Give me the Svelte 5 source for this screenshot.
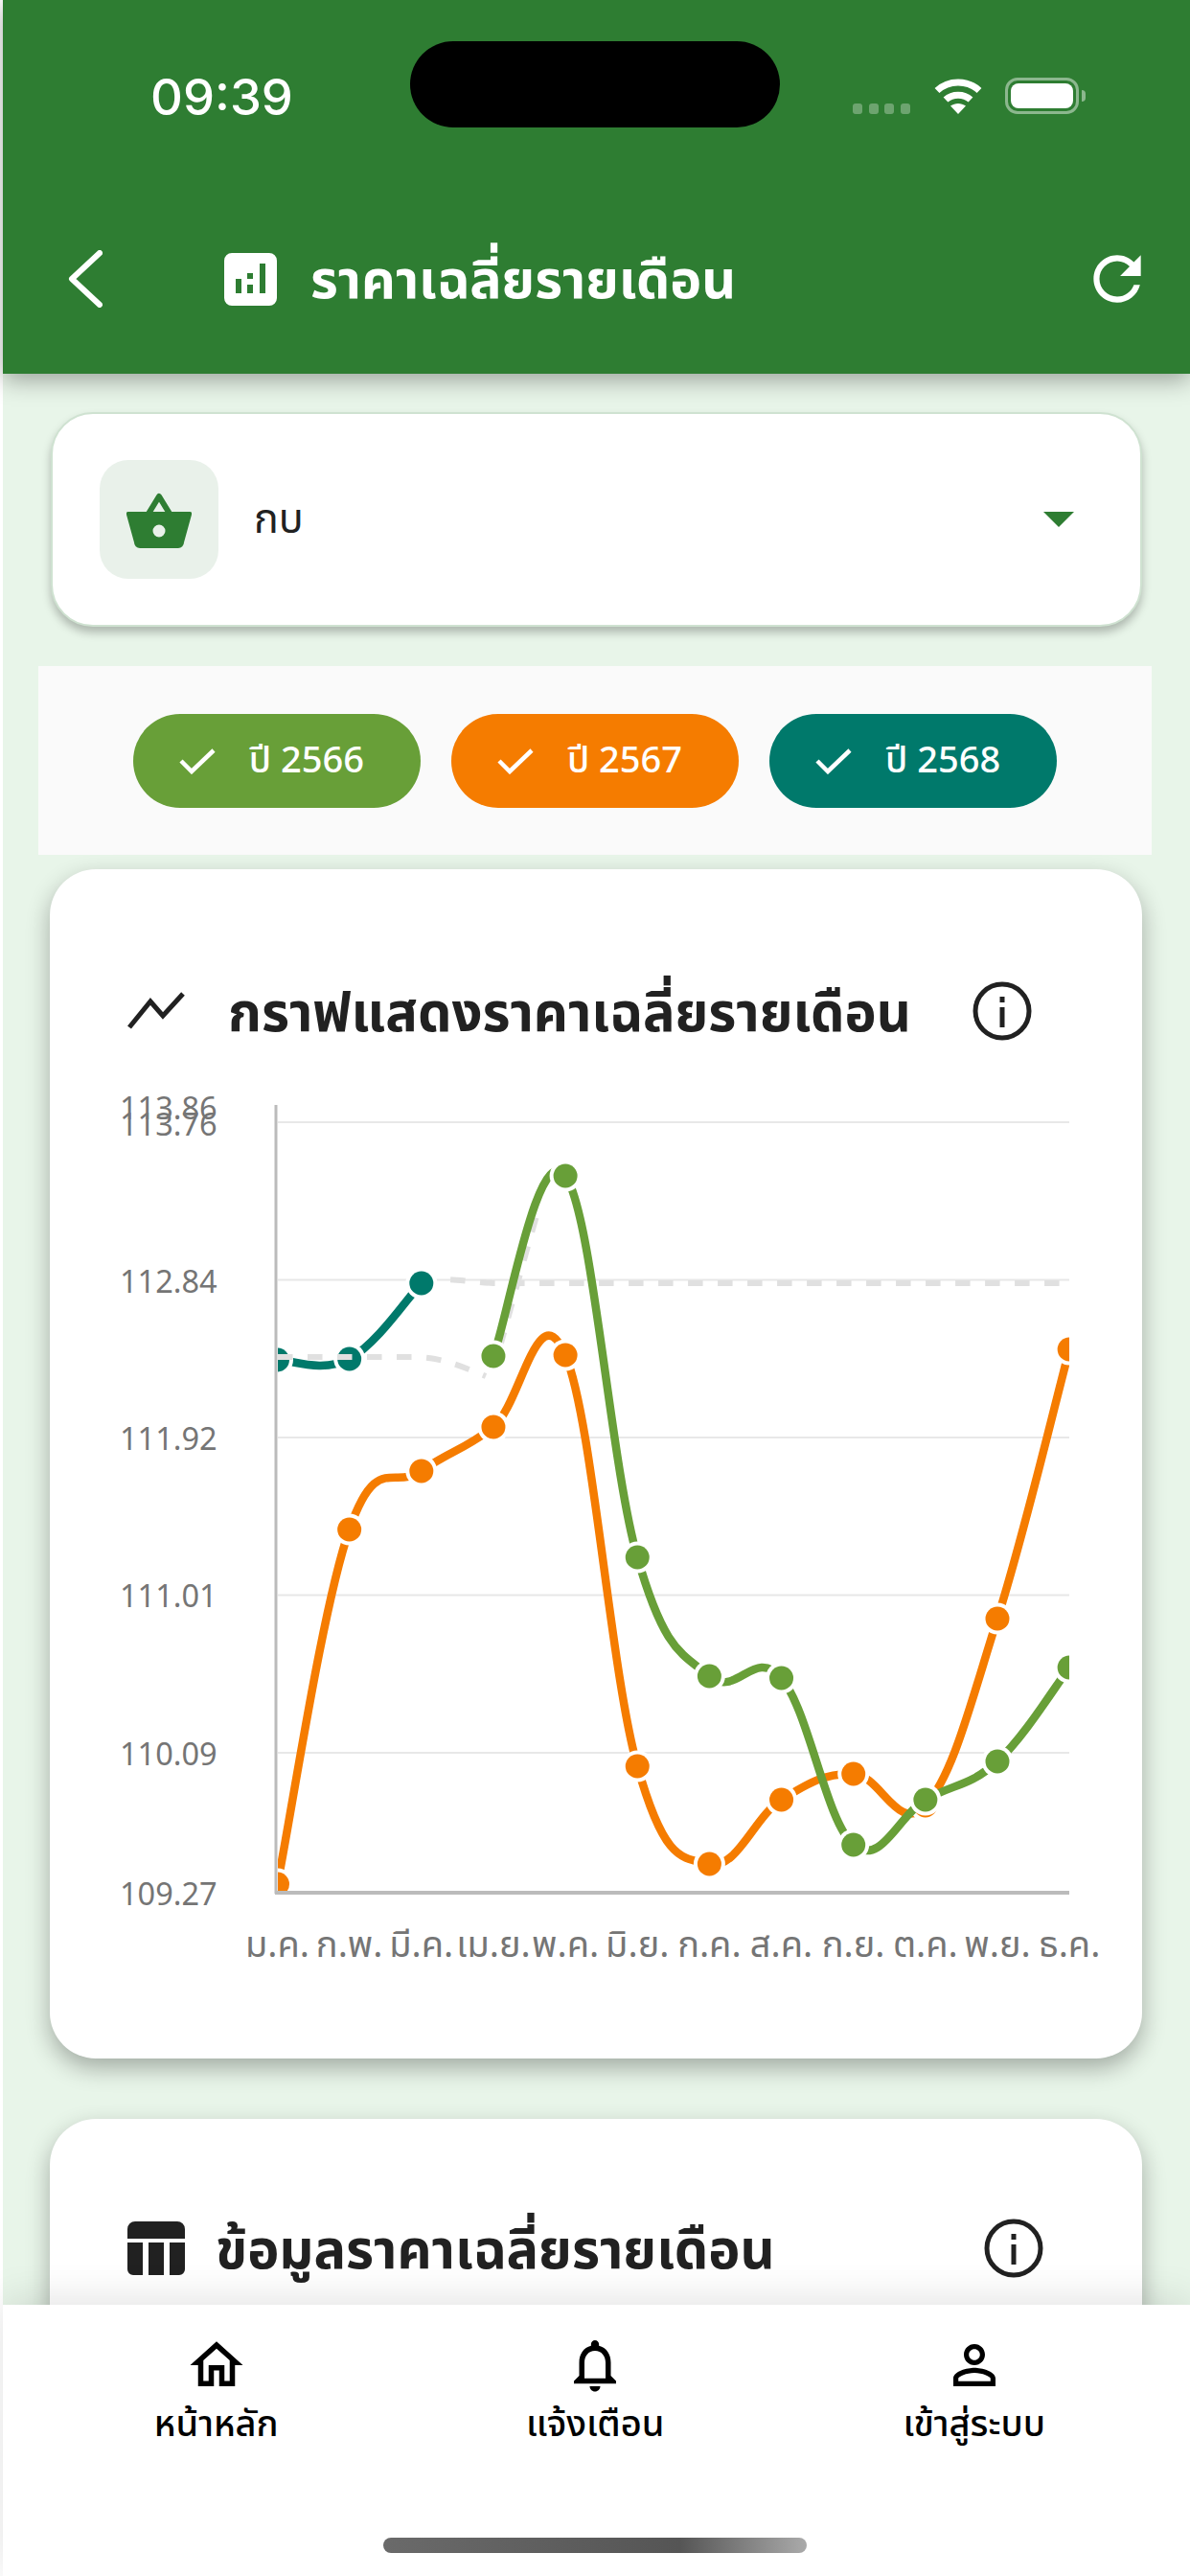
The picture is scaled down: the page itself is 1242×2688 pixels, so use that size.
<script>
  const xAt = (i) => 289.5 + i * 75.15;
  const smooth = 0.38;

  const series = [
    {
      name: "2567",
      color: "#f57c00",
      from: 0,
      ys: [1966, 1596, 1535, 1489, 1414, 1843, 1945, 1878, 1851, 1884, 1689, 1408],
    },
    { name: "2568", color: "#00796b", from: 0, ys: [1419, 1418, 1339] },
    {
      name: "2566",
      color: "#689f38",
      from: 3,
      ys: [1415, 1227, 1625, 1749, 1751, 1925, 1878, 1838, 1740],
    },
  ];

  const years = [
    { label: "ปี 2566", color: "#689f38" },
    { label: "ปี 2567", color: "#f57c00" },
    { label: "ปี 2568", color: "#00796b" },
  ];
  const months = ["ม.ค.", "ก.พ.", "มี.ค.", "เม.ย.", "พ.ค.", "มิ.ย.", "ก.ค.", "ส.ค.", "ก.ย.", "ต.ค.", "พ.ย.", "ธ.ค."];
  const grid = [1171, 1335.5, 1500, 1664.5, 1829];
  const yLabels = [
    { t: "113.86", y: 1155 },
    { t: "113.76", y: 1172 },
    { t: "112.84", y: 1336 },
    { t: "111.92", y: 1500 },
    { t: "111.01", y: 1664 },
    { t: "110.09", y: 1829 },
    { t: "109.27", y: 1975 },
  ];
  const navItems = [
    {
      label: "หน้าหลัก",
      d: "M12 5.69l5 4.5V18h-2v-6H9v6H7v-7.81l5-4.5M12 3L2 12h3v8h6v-6h2v6h6v-8h3L12 3z",
    },
    {
      label: "แจ้งเตือน",
      d: "M12 22c1.1 0 2-.9 2-2h-4c0 1.1.89 2 2 2zm6-6v-5c0-3.07-1.64-5.64-4.5-6.32V4c0-.83-.67-1.5-1.5-1.5s-1.5.67-1.5 1.5v.68C7.63 5.36 6 7.92 6 11v5l-2 2v1h16v-1l-2-2zm-2 1H8v-6c0-2.48 1.51-4.5 4-4.5s4 2.02 4 4.5v6z",
    },
    {
      label: "เข้าสู่ระบบ",
      d: "M12 5.9c1.16 0 2.1.94 2.1 2.1s-.94 2.1-2.1 2.1S9.9 9.16 9.9 8s.94-2.1 2.1-2.1m0 9c2.97 0 6.1 1.46 6.1 2.1v1.1H5.9V17c0-.64 3.13-2.1 6.1-2.1M12 4C9.79 4 8 5.79 8 8s1.79 4 4 4 4-1.79 4-4-1.79-4-4-4zm0 9c-2.67 0-8 1.34-8 4v3h16v-3c0-2.66-5.33-4-8-4z",
    },
  ];

  function points(s) {
    return s.ys.map((y, i) => ({ x: xAt(s.from + i), y }));
  }

  // same idea as a curved chart line: tangent from the two neighbours
  function curve(pts) {
    let d = `M${pts[0].x} ${pts[0].y}`;
    for (let i = 1; i < pts.length; i++) {
      const p0 = pts[Math.max(i - 2, 0)];
      const p1 = pts[i - 1];
      const p2 = pts[i];
      const p3 = pts[Math.min(i + 1, pts.length - 1)];
      const c1x = p1.x + ((p2.x - p0.x) / 2) * smooth;
      const c1y = p1.y + ((p2.y - p0.y) / 2) * smooth;
      const c2x = p2.x - ((p3.x - p1.x) / 2) * smooth;
      const c2y = p2.y - ((p3.y - p1.y) / 2) * smooth;
      d += ` C${c1x} ${c1y} ${c2x} ${c2y} ${p2.x} ${p2.y}`;
    }
    return d;
  }
</script>

<div class="screen">
  <header class="top">
    <div class="status">
      <span class="time">09:39</span>
      <div class="island"></div>
      <div class="signal"><i></i><i></i><i></i><i></i></div>
      <svg class="wifi" width="52" height="38" viewBox="0 0 52 38" aria-hidden="true">
        <path d="M4 13.5C16 2 36 2 48 13.5" class="arc" />
        <path d="M13 23C20 16.5 32 16.5 39 23" class="arc" />
        <path d="M18 29.5C23 26 29 26 34 29.5L26 38Z" fill="#fff" />
      </svg>
      <div class="battery"><div class="cell"></div></div>
      <div class="cap"></div>
    </div>
    <div class="toolbar">
      <svg class="back" width="36" height="60" viewBox="0 0 36 60" aria-hidden="true">
        <path d="M33 3L4 30L33 57" fill="none" stroke="#fff" stroke-width="6" stroke-linecap="round" stroke-linejoin="round" />
      </svg>
      <svg class="chart-badge" width="55" height="55" viewBox="0 0 55 55" aria-hidden="true">
        <path fill="#fff" fill-rule="evenodd" d="M8 0H47A8 8 0 0 1 55 8V47A8 8 0 0 1 47 55H8A8 8 0 0 1 0 47V8A8 8 0 0 1 8 0ZM12 27V42H18V27ZM24 21V27H30V21ZM24 33V42H30V33ZM37 11V42H43V11Z" />
      </svg>
      <h1>ราคาเฉลี่ยรายเดือน</h1>
      <svg class="refresh" width="74" height="74" viewBox="0 0 24 24" aria-hidden="true">
        <path fill="#fff" d="M17.65 6.35C16.2 4.9 14.21 4 12 4c-4.42 0-7.99 3.58-7.99 8s3.57 8 7.99 8c3.73 0 6.84-2.55 7.73-6h-2.08c-.82 2.33-3.04 4-5.65 4-3.31 0-6-2.69-6-6s2.69-6 6-6c1.66 0 3.14.69 4.22 1.78L13 11h7V4l-2.35 2.35z" />
      </svg>
    </div>
  </header>

  <main class="body">
    <section class="picker">
      <div class="basket">
        <svg width="68" height="60" viewBox="0 0 68 60" aria-hidden="true">
          <path d="M23 24L34 6L45 24" fill="none" stroke="#2e7d32" stroke-width="6" stroke-linejoin="round" />
          <path fill="#2e7d32" fill-rule="evenodd" d="M2 22H66A2 2 0 0 1 68 25L60 54A6 6 0 0 1 54 60H14A6 6 0 0 1 8 54L0 25A2 2 0 0 1 2 22ZM34 35.5A6.5 6.5 0 1 0 34 48.5A6.5 6.5 0 1 0 34 35.5Z" />
        </svg>
      </div>
      <span class="picked">กบ</span>
      <svg class="caret" width="32" height="16" viewBox="0 0 32 16" aria-hidden="true">
        <path d="M0 0H32L16 16Z" fill="#2e7d32" />
      </svg>
    </section>

    <section class="years">
      {#each years as y}
        <div class="chip" style="background: {y.color}">
          <svg width="38" height="28" viewBox="0 0 38 28" aria-hidden="true">
            <path d="M2 14L13 25L36 3" fill="none" stroke="#fff" stroke-width="4.5" />
          </svg>
          <span>{y.label}</span>
        </div>
      {/each}
    </section>

    <section class="card chart-card">
      <div class="card-head">
        <svg class="trend" width="60" height="40" viewBox="0 0 60 40" aria-hidden="true">
          <path d="M2 37L24 10L37 25L58 2" fill="none" stroke="#212121" stroke-width="5" />
        </svg>
        <h2>กราฟแสดงราคาเฉลี่ยรายเดือน</h2>
        <svg class="info" width="62" height="62" viewBox="0 0 62 62" aria-hidden="true">
          <circle cx="31" cy="31" r="28" fill="none" stroke="#212121" stroke-width="5" />
          <rect x="28.5" y="27" width="5" height="21" fill="#212121" />
          <rect x="28.5" y="16" width="5" height="6" fill="#212121" />
        </svg>
      </div>

      <svg class="plot" width="1060" height="930" viewBox="100 1130 1060 930" role="img" aria-label="กราฟราคาเฉลี่ยรายเดือน">
        <defs>
          <clipPath id="plot-area"><rect x="290" y="1140" width="826" height="833" /></clipPath>
        </defs>
        {#each grid as y}
          <line x1="290" x2="1116" y1={y} y2={y} class="grid" />
        {/each}
        <line x1="288" x2="288" y1="1153" y2="1976" class="axis" />
        <line x1="287" x2="1116" y1="1975" y2="1975" class="axis base" />
        {#each yLabels as l}
          <text x="125" y={l.y} class="y-label">{l.t}</text>
        {/each}
        {#each months as m, i}
          <text x={xAt(i)} y="2042" class="x-label">{m}</text>
        {/each}
        <g clip-path="url(#plot-area)">
          <path class="dash" d="M439.7 1339C460 1331 480 1337 515 1339L1116 1339" />
          {#each series as s}
            <path d={curve(points(s))} fill="none" stroke={s.color} stroke-width="8.5" />
            {#each points(s) as p}
              <circle cx={p.x} cy={p.y} r="16.5" fill="#fff" />
              <circle cx={p.x} cy={p.y} r="12.5" fill={s.color} />
            {/each}
            {#if s.name === "2568"}
              <path class="dash" d="M290 1416L430 1416C460 1416 480 1425 507 1436" />
              <path class="dash" d="M522 1405C532 1370 545 1320 562 1262" />
            {/if}
          {/each}
        </g>
      </svg>
    </section>

    <section class="card table-card">
      <div class="card-head">
        <svg class="table-icon" width="60" height="56" viewBox="0 0 60 56" aria-hidden="true">
          <path fill="#212121" d="M8 0H52A8 8 0 0 1 60 8V18H0V8A8 8 0 0 1 8 0ZM0 22H16V56H6A6 6 0 0 1 0 50ZM22 22H38V56H22ZM44 22H60V50A6 6 0 0 1 54 56H44Z" />
        </svg>
        <h2>ข้อมูลราคาเฉลี่ยรายเดือน</h2>
        <svg class="info" width="62" height="62" viewBox="0 0 62 62" aria-hidden="true">
          <circle cx="31" cy="31" r="28" fill="none" stroke="#212121" stroke-width="5" />
          <rect x="28.5" y="27" width="5" height="21" fill="#212121" />
          <rect x="28.5" y="16" width="5" height="6" fill="#212121" />
        </svg>
      </div>
    </section>
  </main>

  <nav class="tabs">
    <div class="tab-row">
      {#each navItems as n}
        <div class="tab">
          <svg width="66" height="66" viewBox="0 0 24 24" aria-hidden="true"><path d={n.d} fill="#000" /></svg>
          <span>{n.label}</span>
        </div>
      {/each}
    </div>
    <div class="home-bar"></div>
  </nav>
</div>

<style>
  :global(body) {
    margin: 0;
    background: #fff;
  }
  .screen {
    width: 1242px;
    height: 2688px;
    padding-left: 3px;
    box-sizing: border-box;
    display: flex;
    flex-direction: column;
    overflow: hidden;
    font-family: "Noto Sans", "Noto Sans Thai", "Noto Sans CJK SC", sans-serif;
    background: #fff;
  }

  /* top bar */
  .top {
    position: relative;
    z-index: 2;
    height: 390px;
    flex: none;
    background: #2e7d32;
    box-shadow: 0 6px 24px rgba(0, 0, 0, 0.35);
  }
  .status {
    display: flex;
    align-items: flex-start;
    height: 205px;
    padding: 43px 0 0 154px;
    box-sizing: border-box;
    color: #fff;
  }
  .time {
    width: 271px;
    margin-top: 27px;
    font-family: Inter, sans-serif;
    font-size: 52.5px;
    font-weight: 500;
    line-height: 62px;
  }
  .island {
    width: 386px;
    height: 90px;
    border-radius: 45px;
    background: #000;
  }
  .signal {
    display: flex;
    gap: 6.5px;
    margin: 65px 0 0 76px;
  }
  .signal i {
    width: 10px;
    height: 11px;
    border-radius: 3px;
    background: rgba(255, 255, 255, 0.3);
  }
  .wifi {
    margin: 38px 0 0 24px;
  }
  .arc {
    fill: none;
    stroke: #fff;
    stroke-width: 7;
  }
  .battery {
    width: 77px;
    height: 38px;
    margin: 38px 0 0 23px;
    padding: 3px;
    box-sizing: border-box;
    border: 3px solid rgba(255, 255, 255, 0.45);
    border-radius: 13px;
  }
  .cell {
    height: 100%;
    border-radius: 8px;
    background: #fff;
  }
  .cap {
    width: 4px;
    height: 12px;
    margin: 51px 0 0 3px;
    border-radius: 0 4px 4px 0;
    background: rgba(255, 255, 255, 0.45);
  }
  .toolbar {
    display: flex;
    align-items: center;
    height: 172px;
    padding: 0 39px 0 68px;
  }
  .chart-badge {
    margin-left: 127px;
  }
  h1 {
    margin: 6px 0 0 35px;
    color: #fff;
    font-size: 55.6px;
    font-weight: 700;
    white-space: nowrap;
  }
  .refresh {
    margin-left: auto;
  }

  /* content */
  .body {
    flex: 1;
    min-height: 0;
    overflow: hidden;
    padding: 40px 40px 0 37px;
    background: #e8f5e9;
  }
  .picker {
    display: flex;
    align-items: center;
    height: 224px;
    margin: 0 10px 41px 13px;
    padding: 0 69px 0 49px;
    box-sizing: border-box;
    border: 2px solid #cfe2d1;
    border-radius: 44px;
    background: #fff;
    box-shadow: 0 6px 10px rgba(0, 0, 0, 0.25);
  }
  .basket {
    display: flex;
    align-items: center;
    justify-content: center;
    width: 124px;
    height: 124px;
    border-radius: 30px;
    background: #e9f1ea;
  }
  .picked {
    margin-left: 37px;
    color: #212121;
    font-size: 43px;
  }
  .caret {
    margin-left: auto;
  }
  .years {
    display: flex;
    justify-content: center;
    gap: 32px;
    height: 197px;
    align-items: center;
    margin-bottom: 15px;
    background: #fafafa;
  }
  .chip {
    display: flex;
    align-items: center;
    gap: 35px;
    height: 98px;
    padding: 0 59px 0 48px;
    border-radius: 49px;
    color: #fff;
    font-size: 38px;
    font-weight: 500;
  }
  .card {
    margin: 0 10px 0 12px;
    border-radius: 48px;
    background: #fff;
    box-shadow: 0 10px 24px rgba(0, 0, 0, 0.3);
  }
  .chart-card {
    height: 1241px;
    padding-top: 117px;
    box-sizing: border-box;
    margin-bottom: 63px;
  }
  .table-card {
    height: 500px;
    padding-top: 104px;
    box-sizing: border-box;
  }
  .card-head {
    display: flex;
    align-items: center;
    height: 62px;
    padding-left: 81px;
  }
  h2 {
    margin: 6px 0 0;
    color: #212121;
    font-size: 56px;
    font-weight: 700;
    white-space: nowrap;
  }
  .trend + h2 {
    margin-left: 45px;
  }
  .table-icon + h2 {
    margin-left: 32px;
  }
  .chart-card .info {
    margin-left: auto;
    margin-right: 115px;
  }
  .table-card .info {
    margin-left: auto;
    margin-right: 103px;
  }
  .plot {
    display: block;
    margin: 44px 0 0 48px;
  }
  .grid {
    stroke: #e8e8e8;
    stroke-width: 2;
  }
  .axis {
    stroke: #bbb;
    stroke-width: 3;
  }
  .axis.base {
    stroke-width: 4;
  }
  .dash {
    fill: none;
    stroke: #e0e0e0;
    stroke-width: 6;
    stroke-dasharray: 15.5 15.5;
  }
  .y-label {
    fill: #757575;
    font-size: 32.5px;
    dominant-baseline: central;
  }
  .x-label {
    fill: #757575;
    font-size: 38px;
    text-anchor: middle;
  }

  /* bottom nav */
  .tabs {
    position: relative;
    z-index: 2;
    flex: none;
    height: 283px;
    box-sizing: border-box;
    padding: 30px 27.5px 0 25px;
    background: #fff;
    box-shadow: 0 -4px 40px rgba(0, 0, 0, 0.12);
  }
  .tab-row {
    display: grid;
    grid-template-columns: repeat(3, 1fr);
  }
  .tab {
    display: flex;
    flex-direction: column;
    align-items: center;
    color: #000;
    font-size: 38px;
    font-weight: 500;
  }
  .tab span {
    line-height: 52px;
  }
  .home-bar {
    position: absolute;
    left: 397px;
    bottom: 24px;
    width: 442px;
    height: 16px;
    border-radius: 8px;
    background: linear-gradient(90deg, #6a6a6a, #555 70%, #aaa);
  }
</style>
